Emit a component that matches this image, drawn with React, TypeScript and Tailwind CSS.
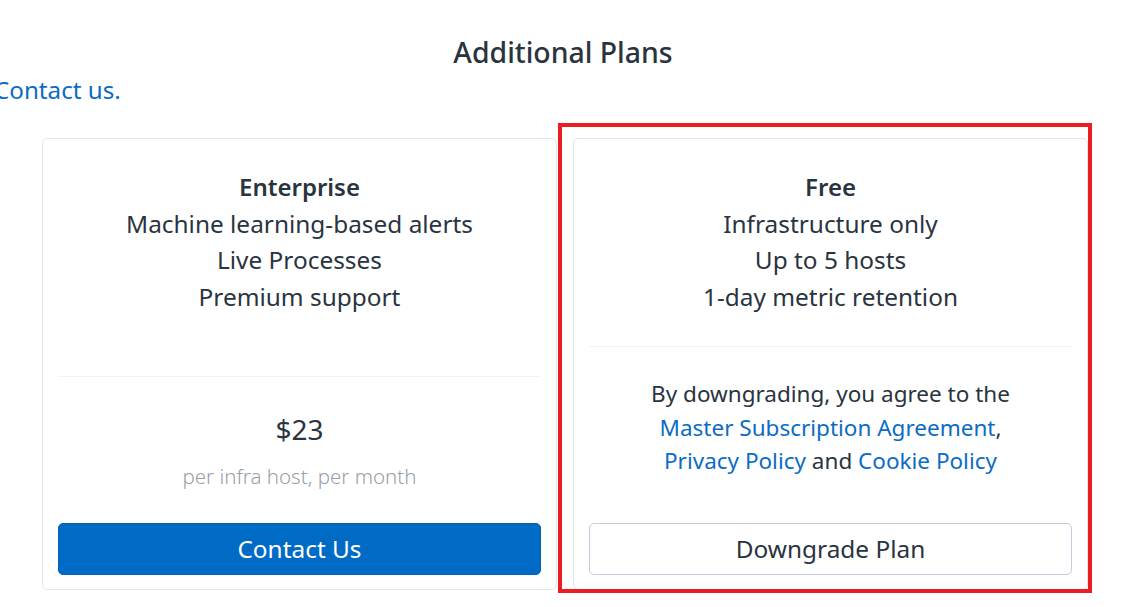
import React from "react";

export default function App() {
  const font = { fontFamily: '"Noto Sans", "Open Sans", sans-serif' };
  return (
    <div className="relative w-[1126px] h-[607px] overflow-hidden bg-white text-[#29343f]" style={font}>
      <div className="pt-[33px] text-center text-[28.4px] leading-[38px] font-medium text-[#29343f]">
        Additional Plans
      </div>
      <div className="ml-[-6px] mt-[3px] text-[24.2px] leading-[32px] text-[#0b6cc3]">Contact us.</div>
      <div className="flex gap-[16px] ml-[42px] mt-[32px]">
        <div className="w-[515px] h-[452px] border border-[#e3e4ec] rounded-[5px] flex flex-col px-[15px]">
          <div className="h-[237px] pt-[30px] text-center text-[24.4px] leading-[36.7px]">
            <div className="font-semibold text-[24px]">Enterprise</div>
            <div>Machine learning-based alerts</div>
            <div>Live Processes</div>
            <div>Premium support</div>
          </div>
          <div className="h-px bg-[#f1f2f5]" />
          <div className="flex-1 flex flex-col pb-[14px]">
            <div className="pt-[32px] text-center text-[28px] leading-[40px]">$23</div>
            <div className="mt-[13px] text-center text-[20.5px] leading-[28px] font-light text-[#9aa0a8]">
              per infra host, per month
            </div>
            <button className="mt-auto h-[52px] w-full rounded-[5px] bg-[#006bc4] text-white text-[24.4px] border border-[#0062b8]">
              Contact Us
            </button>
          </div>
        </div>
        <div className="w-[515px] h-[452px] border border-[#e3e4ec] rounded-[5px] flex flex-col px-[15px]">
          <div className="h-[207px] pt-[30px] text-center text-[24.4px] leading-[36.7px]">
            <div className="font-semibold text-[24px]">Free</div>
            <div>Infrastructure only</div>
            <div>Up to 5 hosts</div>
            <div>1-day metric retention</div>
          </div>
          <div className="h-px bg-[#f1f2f5]" />
          <div className="flex-1 flex flex-col pb-[14px]">
            <div className="pt-[30px] text-center text-[22.5px] leading-[33.5px]">
              <div>By downgrading, you agree to the</div>
              <div>
                <span className="text-[#0b6cc3]">Master Subscription Agreement</span>,
              </div>
              <div>
                <span className="text-[#0b6cc3]">Privacy Policy</span> and{" "}
                <span className="text-[#0b6cc3]">Cookie Policy</span>
              </div>
            </div>
            <button className="mt-auto h-[52px] w-full rounded-[5px] bg-white text-[#29343f] text-[24.4px] border border-[#c5cbdc]">
              Downgrade Plan
            </button>
          </div>
        </div>
      </div>
      <div className="absolute left-[558px] top-[123px] w-[534px] h-[470px] border-[4px] border-[#ec1c24] pointer-events-none" />
    </div>
  );
}
